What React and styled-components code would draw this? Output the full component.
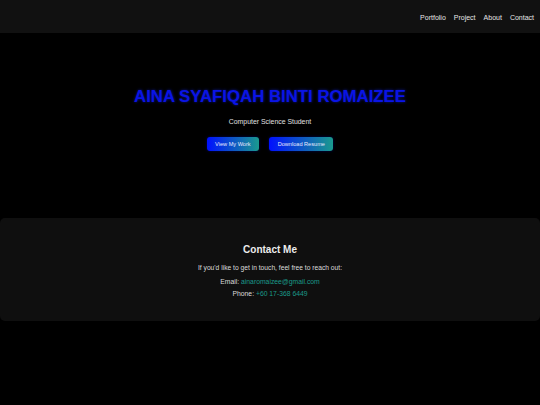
import React from 'react';
import styled, { createGlobalStyle } from 'styled-components';

const GlobalStyle = createGlobalStyle`
    html, body {
        margin: 0;
        padding: 0;
        background: #000;
        font-family: "Liberation Sans", Arial, sans-serif;
        color: #e0e0e0;
    }
    * { box-sizing: border-box; }
`;

const links = ['Portfolio', 'Project', 'About', 'Contact'];

export default function App() {
    return (
        <Page>
            <GlobalStyle />
            <Header>
                <Nav>
                    {links.map(link => (
                        <NavLink key={link} href="#">{link}</NavLink>
                    ))}
                </Nav>
            </Header>
            <Hero>
                <Title>AINA SYAFIQAH BINTI ROMAIZEE</Title>
                <Subtitle>Computer Science Student</Subtitle>
                <Buttons>
                    <GradientButton>View My Work</GradientButton>
                    <GradientButton>Download Resume</GradientButton>
                </Buttons>
            </Hero>
            <Contact>
                <ContactTitle>Contact Me</ContactTitle>
                <ContactText>If you'd like to get in touch, feel free to reach out:</ContactText>
                <ContactLine>Email: <Link href="#">ainaromaizee@gmail.com</Link></ContactLine>
                <ContactLine>Phone: <Link href="#">+60 17-368 6449</Link></ContactLine>
            </Contact>
        </Page>
    );
}

const Page = styled.div`
    min-height: 405px;
    background: #000;
`;

const Header = styled.header`
    height: 33px;
    background: #111111;
    display: flex;
    align-items: center;
    justify-content: flex-end;
    padding: 1px 6px 0 0;
`;

const Nav = styled.nav`
    display: flex;
    gap: 8px;
`;

const NavLink = styled.a`
    color: #e6e6e6;
    text-decoration: none;
    font-size: 7px;
`;

const Hero = styled.section`
    height: 185px;
    display: flex;
    flex-direction: column;
    align-items: center;
    padding-top: 54px;
`;

const Title = styled.h1`
    margin: 0;
    font-size: 16.8px;
    line-height: 20px;
    font-weight: bold;
    color: #0a14e6;
    text-shadow: 0 0 3px rgba(20, 40, 255, 0.6);
`;

const Subtitle = styled.p`
    margin: 10px 0 0 0;
    font-size: 6.9px;
    line-height: 10px;
    color: #e0e0e0;
`;

const Buttons = styled.div`
    display: flex;
    gap: 10px;
    margin-top: 10px;
`;

const GradientButton = styled.button`
    border: none;
    outline: none;
    height: 14px;
    padding: 0 8.5px;
    border-radius: 3px;
    font-family: "Liberation Sans", Arial, sans-serif;
    font-size: 5.6px;
    color: #e8e8ff;
    background: linear-gradient(90deg, #0010ff 0%, #1a9a8e 100%);
    box-shadow: 0 0 3px rgba(0, 20, 255, 0.35);
`;

const Contact = styled.section`
    height: 103px;
    background: #0f0f0f;
    border-radius: 5px;
    display: flex;
    flex-direction: column;
    align-items: center;
    padding-top: 25px;
`;

const ContactTitle = styled.h2`
    margin: 0;
    font-size: 10px;
    line-height: 14px;
    font-weight: bold;
    color: #ececec;
`;

const ContactText = styled.p`
    margin: 6px 0 3px 0;
    font-size: 6.7px;
    line-height: 10px;
    color: #dcdcdc;
`;

const ContactLine = styled.p`
    margin: 1px 0 0 0;
    font-size: 6.8px;
    line-height: 10.5px;
    color: #dcdcdc;
`;

const Link = styled.a`
    color: #1a9a8a;
    text-decoration: none;
`;
